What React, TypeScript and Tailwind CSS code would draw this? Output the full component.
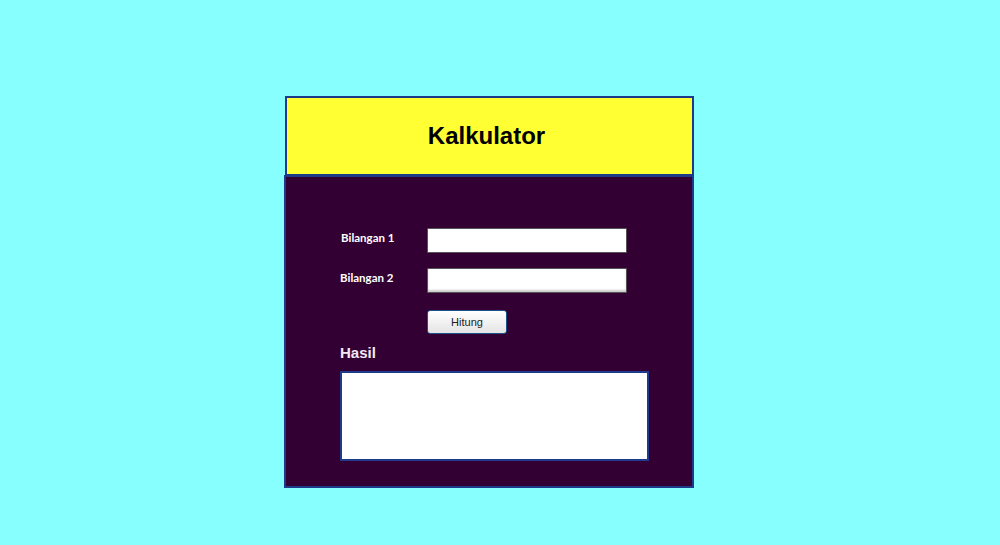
import React from "react";

export default function App() {
  return (
    <div className="w-[1000px] h-[545px] bg-[#88ffff] overflow-hidden" style={{ fontFamily: '"Liberation Sans", Arial, sans-serif' }}>
      <div className="pt-[96px] pl-[284px]">
        <div className="ml-[1px] w-[409px] h-[80px] bg-[#ffff33] border-2 border-[#1f3a8a] flex items-center justify-center">
          <span className="text-[24px] font-bold text-black -ml-[6px]">Kalkulator</span>
        </div>
        <div className="-mt-[1px] w-[410px] h-[313px] bg-[#330033] border-2 border-[#1f3a8a] pl-[54px] pt-[51px]">
          <div className="flex items-center h-[25px]">
            <span className="w-[87px] pl-[1px] pb-[5px] text-[11.5px] text-white font-bold" style={{ fontFamily: 'Lato, "DejaVu Sans", sans-serif' }}>Bilangan 1</span>
            <div className="w-[200px] h-[25px] bg-white border border-[#555] rounded-[1px]" />
          </div>
          <div className="flex items-center h-[25px] mt-[15px]">
            <span className="w-[87px] pb-[5px] text-[11.5px] text-white font-bold" style={{ fontFamily: 'Lato, "DejaVu Sans", sans-serif' }}>Bilangan 2</span>
            <div className="w-[200px] h-[25px] bg-white border border-[#555] rounded-[1px] shadow-[inset_0_-2px_2px_#ccc]" />
          </div>
          <div className="mt-[17px] ml-[87px] w-[80px] h-[24px] rounded-[3px] border border-[#1f4f8a] bg-gradient-to-b from-white to-[#e4e4e4] flex items-center justify-center">
            <span className="text-[11px] text-[#222]" style={{ fontFamily: '"Liberation Sans", Arial, sans-serif' }}>Hitung</span>
          </div>
          <div className="mt-[10px] text-[15px] font-bold text-[#f4e8f4] leading-[18px]" style={{ fontFamily: '"Liberation Sans", Arial, sans-serif' }}>Hasil</div>
          <div className="mt-[9px] w-[309px] h-[90px] bg-white border-2 border-[#1f3a8a]" />
        </div>
      </div>
    </div>
  );
}
